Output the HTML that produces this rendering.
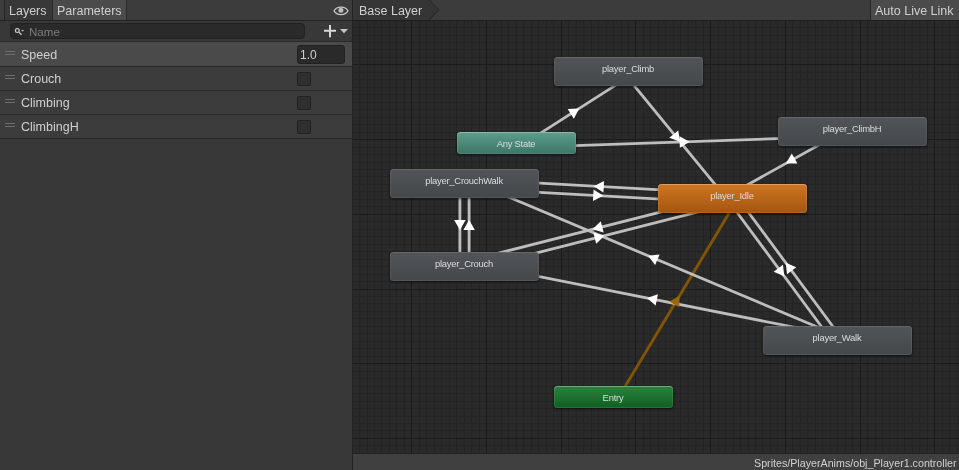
<!DOCTYPE html>
<html><head><meta charset="utf-8">
<style>
*{margin:0;padding:0;box-sizing:border-box}
html,body{width:959px;height:470px;overflow:hidden;background:#383838;font-family:"Liberation Sans",sans-serif}
.tb,.lbl,.node span{will-change:transform}
.abs{position:absolute}
.node{position:absolute;border-radius:3.5px;box-shadow:inset 0 0 0 1px rgba(255,255,255,.07),inset 0 1px 0 rgba(255,255,255,.06),0 1px 3px rgba(0,0,0,.6)}
.node.c{box-shadow:inset 0 0 0 1px rgba(255,255,255,.1),inset 0 1px 0 rgba(255,255,255,.22),0 1px 3px rgba(0,0,0,.6)}
.node span{position:absolute;left:-1px;right:0;top:6.9px;line-height:9px;font-size:9.4px;letter-spacing:-0.22px;color:#dcdcdc;text-align:center;white-space:nowrap}
.tb{position:absolute;color:#d0d0d0;font-size:12.5px;line-height:13px;white-space:nowrap}
.row{position:absolute;left:0;width:352px;height:24px;background:#3c3c3c;border-bottom:1px solid #2a2a2a}
.row .h1,.row .h2{position:absolute;left:5px;width:10px;height:1px;background:#6e6e6e}
.row .lbl{position:absolute;left:21px;top:6px;color:#d0d0d0;font-size:12.5px;line-height:13px;white-space:nowrap}
.cb{position:absolute;left:297px;width:14px;height:14px;background:#2f2f2f;border:1px solid #212121;border-radius:2px}
</style></head><body>
<div class="abs" style="left:0;top:0;width:352px;height:470px;background:#383838"></div>
<div class="abs" style="left:0;top:0;width:352px;height:20px;background:#3c3c3c"></div>
<div class="abs" style="left:4px;top:0;width:1px;height:20px;background:#262626"></div>
<div class="abs" style="left:5px;top:0;width:47px;height:20px;background:#383838"></div>
<div class="abs" style="left:52px;top:0;width:1px;height:20px;background:#2a2a2a"></div>
<div class="abs" style="left:53px;top:0;width:73px;height:20px;background:#4b4b4b"></div>
<div class="abs" style="left:126px;top:0;width:1px;height:20px;background:#2a2a2a"></div>
<div class="tb" style="left:9px;top:5px">Layers</div>
<div class="tb" style="left:57px;top:5px">Parameters</div>
<svg class="abs" style="left:330px;top:4px" width="22" height="14" viewBox="330 4 22 14">
<path d="M334 10.9 C336.8 5.9, 345.2 5.9, 348 10.9 C345.2 15.9, 336.8 15.9, 334 10.9 Z" fill="none" stroke="#c6c6c6" stroke-width="1.15"/>
<circle cx="340.9" cy="10.3" r="2.5" fill="#bdbdbd"/>
</svg>
<div class="abs" style="left:0;top:20px;width:352px;height:1px;background:#232323"></div>
<div class="abs" style="left:10px;top:23px;width:295px;height:16px;background:#2a2a2a;border:1px solid #222;border-radius:4px"></div>
<svg class="abs" style="left:10px;top:24px" width="20" height="14" viewBox="10 24 20 14">
<circle cx="17.3" cy="30.6" r="1.9" fill="none" stroke="#c8c8c8" stroke-width="1.2"/>
<path d="M18.9 32.3 L21.6 34.8" stroke="#c8c8c8" stroke-width="1.3"/>
<path d="M21.1 30.1 H24.0 L22.55 31.8 Z" fill="#c0c0c0"/>
</svg>
<div class="tb" style="left:29px;top:24.5px;color:#7c7c7c;font-size:11.6px">Name</div>
<svg class="abs" style="left:320px;top:22px" width="32" height="18" viewBox="320 22 32 18">
<path d="M324 30.7 H336 M330 25 V37.2" stroke="#d6d6d6" stroke-width="2"/>
<path d="M340 29.1 H348 L344 33.2 Z" fill="#c6c6c6"/>
</svg>
<div class="abs" style="left:0;top:41px;width:352px;height:1px;background:#2a2a2a"></div>
<div class="row" style="top:42px;height:25px;background:#4a4a4a"><div class="h1" style="top:9px"></div><div class="h2" style="top:12px"></div><div class="lbl" style="top:7px">Speed</div></div>
<div class="abs" style="left:297px;top:45px;width:48px;height:19px;background:#2a2a2a;border:1px solid #212121;border-radius:3px"></div>
<div class="tb" style="left:300px;top:49px;font-size:12px">1.0</div>
<div class="row" style="top:67px"><div class="h1" style="top:8px"></div><div class="h2" style="top:11px"></div><div class="lbl">Crouch</div></div>
<div class="row" style="top:91px"><div class="h1" style="top:8px"></div><div class="h2" style="top:11px"></div><div class="lbl">Climbing</div></div>
<div class="row" style="top:115px"><div class="h1" style="top:8px"></div><div class="h2" style="top:11px"></div><div class="lbl">ClimbingH</div></div>
<div class="cb" style="top:72px"></div>
<div class="cb" style="top:96px"></div>
<div class="cb" style="top:120px"></div>
<div class="abs" style="left:352px;top:0;width:1px;height:470px;background:#232323"></div>
<div class="abs" style="left:353px;top:0;width:606px;height:20px;background:#3c3c3c"></div>
<svg class="abs" style="left:353px;top:0" width="100" height="20" viewBox="353 0 100 20">
<path d="M353 0 H429 L438.9 9.8 L429 19.6 V20 H353 Z" fill="#353535"/>
<path d="M429 -0.5 L438.9 9.8 L429 20.1" fill="none" stroke="#232323" stroke-width="1"/>
</svg>
<div class="tb" style="left:359px;top:5px">Base Layer</div>
<div class="abs" style="left:353px;top:20px;width:606px;height:1px;background:#1d1d1d"></div>
<div class="abs" style="left:870px;top:0;width:1px;height:20px;background:#252525"></div>
<div class="abs" style="left:871px;top:0;width:88px;height:20px;background:#4b4b4b"></div>
<div class="tb" style="left:875px;top:5px">Auto Live Link</div>
<svg width="606" height="432" style="position:absolute;left:353px;top:21px">
<rect width="100%" height="100%" fill="#2a2a2a"/>
<path d="M6.5 0V432M14.5 0V432M21.5 0V432M28.5 0V432M36.5 0V432M43.5 0V432M51.5 0V432M66.5 0V432M73.5 0V432M81.5 0V432M88.5 0V432M96.5 0V432M103.5 0V432M111.5 0V432M118.5 0V432M126.5 0V432M141.5 0V432M148.5 0V432M155.5 0V432M163.5 0V432M170.5 0V432M178.5 0V432M185.5 0V432M193.5 0V432M200.5 0V432M215.5 0V432M223.5 0V432M230.5 0V432M238.5 0V432M245.5 0V432M253.5 0V432M260.5 0V432M268.5 0V432M275.5 0V432M290.5 0V432M297.5 0V432M305.5 0V432M312.5 0V432M320.5 0V432M327.5 0V432M335.5 0V432M342.5 0V432M350.5 0V432M365.5 0V432M372.5 0V432M380.5 0V432M387.5 0V432M395.5 0V432M402.5 0V432M409.5 0V432M417.5 0V432M424.5 0V432M439.5 0V432M447.5 0V432M454.5 0V432M462.5 0V432M469.5 0V432M477.5 0V432M484.5 0V432M492.5 0V432M499.5 0V432M514.5 0V432M522.5 0V432M529.5 0V432M536.5 0V432M544.5 0V432M551.5 0V432M559.5 0V432M566.5 0V432M574.5 0V432M589.5 0V432M596.5 0V432M604.5 0V432M0 6.5H606M0 14.5H606M0 21.5H606M0 28.5H606M0 36.5H606M0 51.5H606M0 58.5H606M0 66.5H606M0 73.5H606M0 81.5H606M0 88.5H606M0 96.5H606M0 103.5H606M0 111.5H606M0 126.5H606M0 133.5H606M0 141.5H606M0 148.5H606M0 155.5H606M0 163.5H606M0 170.5H606M0 178.5H606M0 185.5H606M0 200.5H606M0 208.5H606M0 215.5H606M0 223.5H606M0 230.5H606M0 238.5H606M0 245.5H606M0 253.5H606M0 260.5H606M0 275.5H606M0 282.5H606M0 290.5H606M0 297.5H606M0 305.5H606M0 312.5H606M0 320.5H606M0 327.5H606M0 335.5H606M0 350.5H606M0 357.5H606M0 365.5H606M0 372.5H606M0 380.5H606M0 387.5H606M0 395.5H606M0 402.5H606M0 409.5H606M0 424.5H606" stroke="#242424" stroke-width="1" fill="none" shape-rendering="crispEdges"/>
<path d="M58.5 0V432M133.5 0V432M208.5 0V432M282.5 0V432M357.5 0V432M432.5 0V432M507.5 0V432M581.5 0V432M0 43.5H606M0 118.5H606M0 193.5H606M0 268.5H606M0 342.5H606M0 417.5H606" stroke="#1b1b1b" stroke-width="1" fill="none" shape-rendering="crispEdges"/>
</svg>
<svg width="959" height="470" style="position:absolute;left:0;top:0">
<defs><clipPath id="gc"><rect x="353" y="21" width="606" height="432"/></clipPath></defs>
<g clip-path="url(#gc)"><line x1="617.45" y1="399.37" x2="736.45" y2="200.87" stroke="#815504" stroke-width="2.9"/><line x1="518.98" y1="146.88" x2="630.98" y2="75.38" stroke="#bebebe" stroke-width="2.8"/><line x1="624.94" y1="74.41" x2="728.94" y2="201.41" stroke="#bebebe" stroke-width="2.8"/><line x1="516.66" y1="147.60" x2="852.66" y2="136.10" stroke="#bebebe" stroke-width="2.8"/><line x1="850.26" y1="127.48" x2="730.26" y2="194.48" stroke="#bebebe" stroke-width="2.8"/><line x1="732.76" y1="193.91" x2="464.76" y2="178.91" stroke="#bebebe" stroke-width="2.8"/><line x1="464.24" y1="188.09" x2="732.24" y2="203.09" stroke="#bebebe" stroke-width="2.8"/><line x1="459.90" y1="183.50" x2="459.90" y2="266.50" stroke="#bebebe" stroke-width="2.8"/><line x1="469.10" y1="266.50" x2="469.10" y2="183.50" stroke="#bebebe" stroke-width="2.8"/><line x1="731.37" y1="194.04" x2="463.37" y2="262.04" stroke="#bebebe" stroke-width="2.8"/><line x1="465.63" y1="270.96" x2="733.63" y2="202.96" stroke="#bebebe" stroke-width="2.8"/><line x1="839.28" y1="336.26" x2="466.28" y2="179.26" stroke="#bebebe" stroke-width="2.8"/><line x1="838.40" y1="335.99" x2="465.40" y2="261.99" stroke="#bebebe" stroke-width="2.8"/><line x1="728.80" y1="201.23" x2="833.80" y2="343.23" stroke="#bebebe" stroke-width="2.8"/><line x1="841.20" y1="337.77" x2="736.20" y2="195.77" stroke="#bebebe" stroke-width="2.8"/><polygon points="579.17,108.45 573.87,118.65 567.68,108.96" fill="#ffffff"/><polygon points="680.10,141.77 669.34,137.70 678.23,130.42" fill="#ffffff"/><polygon points="689.63,141.68 679.88,147.76 679.48,136.27" fill="#ffffff"/><polygon points="785.91,163.41 791.80,153.54 797.41,163.58" fill="#ffffff"/><polygon points="593.79,186.13 604.05,180.94 603.41,192.43" fill="#ffffff"/><polygon points="603.21,195.87 592.95,201.06 593.59,189.57" fill="#ffffff"/><polygon points="459.90,229.98 454.15,220.02 465.65,220.02" fill="#ffffff"/><polygon points="469.10,220.02 474.85,229.98 463.35,229.98" fill="#ffffff"/><polygon points="592.54,229.27 600.78,221.24 603.61,232.39" fill="#ffffff"/><polygon points="604.46,235.73 596.22,243.76 593.39,232.61" fill="#ffffff"/><polygon points="648.19,255.83 659.60,254.39 655.14,264.99" fill="#ffffff"/><polygon points="647.01,298.02 657.90,294.32 655.66,305.60" fill="#ffffff"/><polygon points="784.26,276.24 773.72,271.65 782.96,264.81" fill="#ffffff"/><polygon points="785.74,262.76 796.28,267.35 787.04,274.19" fill="#ffffff"/><polygon points="679.51,295.84 679.32,307.34 669.45,301.43" fill="#9c6709"/></g>
</svg>
<div class="node" style="left:554px;top:57px;width:149px;height:29px;background:linear-gradient(#515458,#45484b)"><span style="top:6.9px">player_Climb</span></div><div class="node c" style="left:457px;top:132px;width:119px;height:22px;background:linear-gradient(#5d9e8b,#3d7566)"><span style="top:6.7px">Any State</span></div><div class="node" style="left:778px;top:117px;width:149px;height:29px;background:linear-gradient(#515458,#45484b)"><span style="top:6.9px">player_ClimbH</span></div><div class="node" style="left:390px;top:169px;width:149px;height:29px;background:linear-gradient(#515458,#45484b)"><span style="top:6.9px">player_CrouchWalk</span></div><div class="node c" style="left:658px;top:184px;width:149px;height:29px;background:linear-gradient(#cf7621,#a3560f)"><span style="top:6.9px">player_Idle</span></div><div class="node" style="left:390px;top:252px;width:149px;height:29px;background:linear-gradient(#515458,#45484b)"><span style="top:6.9px">player_Crouch</span></div><div class="node" style="left:763px;top:326px;width:149px;height:29px;background:linear-gradient(#515458,#45484b)"><span style="top:6.9px">player_Walk</span></div><div class="node c" style="left:554px;top:386px;width:119px;height:22px;background:linear-gradient(#2b833b,#0f6023)"><span style="top:6.7px">Entry</span></div>
<div class="abs" style="left:353px;top:453px;width:606px;height:1px;background:#232323"></div>
<div class="abs" style="left:353px;top:454px;width:606px;height:16px;background:#404040"></div>
<div class="tb" style="left:754px;top:458px;font-size:10.7px;line-height:11px">Sprites/PlayerAnims/obj_Player1.controller</div>
</body></html>
